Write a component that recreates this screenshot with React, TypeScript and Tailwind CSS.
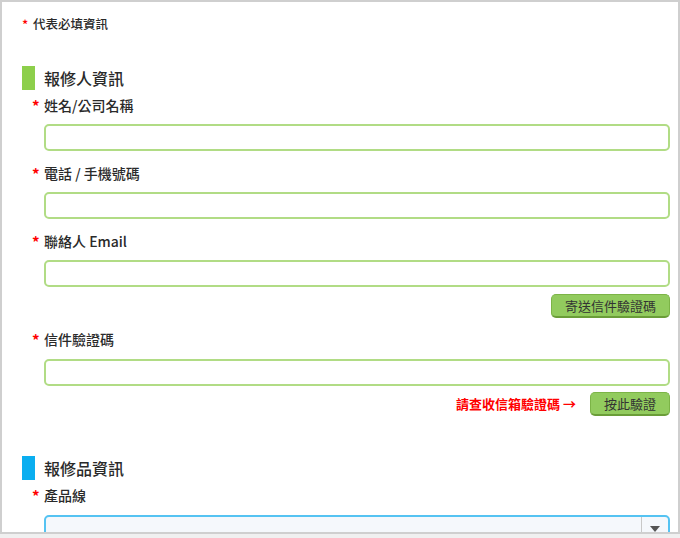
import * as React from "react"

const font = { fontFamily: '"Noto Sans CJK TC", "Noto Sans", sans-serif' }

function Label({ children }: { children: React.ReactNode }) {
  return (
    <div className="ml-[10px] flex h-[20px] items-center text-[14px] font-medium text-[#2a2a2a]">
      <span className="w-[12px] text-[15px] font-bold leading-none text-[#f00]">*</span>
      <span>{children}</span>
    </div>
  )
}

function TextInput() {
  return (
    <input
      type="text"
      className="ml-[22px] block h-[27px] w-[626px] rounded-[5px] border-2 border-[#b1dc85] bg-white outline-none"
    />
  )
}

function GreenButton({ children }: { children: React.ReactNode }) {
  return (
    <button
      type="button"
      className="h-[24px] rounded-[5px] border border-[#7cb447] border-b-2 border-b-[#6a9d38] bg-[#92cb5e] px-[13px] text-[13px] leading-none text-[#333]"
    >
      {children}
    </button>
  )
}

function SectionHead({ color, children }: { color: string; children: React.ReactNode }) {
  return (
    <div className="flex h-[24px] items-center">
      <div className={`h-[24px] w-[13px] ${color}`} />
      <div className="ml-[9px] text-[16px] font-medium text-[#2a2a2a]">{children}</div>
    </div>
  )
}

export default function App() {
  return (
    <div style={font} className="h-[538px] w-[680px] overflow-hidden bg-[#f0f0f0]">
      <div className="h-[534px] overflow-hidden border-2 border-[#cfcfcf] bg-white pl-[20px] pr-[8px] pt-[14px]">
        <div className="flex h-[16px] items-center text-[12.5px] font-medium text-[#2a2a2a]">
          <span className="w-[11px] text-[13px] leading-none text-[#f00]">*</span>
          <span>代表必填資訊</span>
        </div>

        <div className="mt-[34px]">
          <SectionHead color="bg-[#8dcf4b]">報修人資訊</SectionHead>
        </div>

        <div className="mt-[5px]">
          <Label>姓名/公司名稱</Label>
          <div className="mt-[9px]">
            <TextInput />
          </div>
        </div>

        <div className="mt-[12px]">
          <Label>電話 / 手機號碼</Label>
          <div className="mt-[9px]">
            <TextInput />
          </div>
        </div>

        <div className="mt-[12px]">
          <Label>聯絡人 Email</Label>
          <div className="mt-[9px]">
            <TextInput />
          </div>
        </div>

        <div className="mt-[7px] flex justify-end">
          <GreenButton>寄送信件驗證碼</GreenButton>
        </div>

        <div className="mt-[11px]">
          <Label>信件驗證碼</Label>
          <div className="mt-[10px]">
            <TextInput />
          </div>
        </div>

        <div className="mt-[6px] flex items-center justify-end">
          <span className="mr-[14px] text-[13px] font-bold text-[#f00]">請查收信箱驗證碼 →</span>
          <GreenButton>按此驗證</GreenButton>
        </div>

        <div className="mt-[40px]">
          <SectionHead color="bg-[#0aaef0]">報修品資訊</SectionHead>
        </div>

        <div className="mt-[5px]">
          <Label>產品線</Label>
          <div className="ml-[22px] mt-[10px] flex h-[28px] w-[626px] rounded-[5px] border-2 border-[#55c3f2] bg-[#f5f8fc]">
            <div className="flex-1" />
            <div className="flex w-[27px] items-center justify-center border-l border-[#c8c8c8]">
              <svg width="10" height="6" viewBox="0 0 10 6">
                <path d="M0 0 L10 0 L5 6 Z" fill="#555" />
              </svg>
            </div>
          </div>
        </div>
      </div>
    </div>
  )
}
